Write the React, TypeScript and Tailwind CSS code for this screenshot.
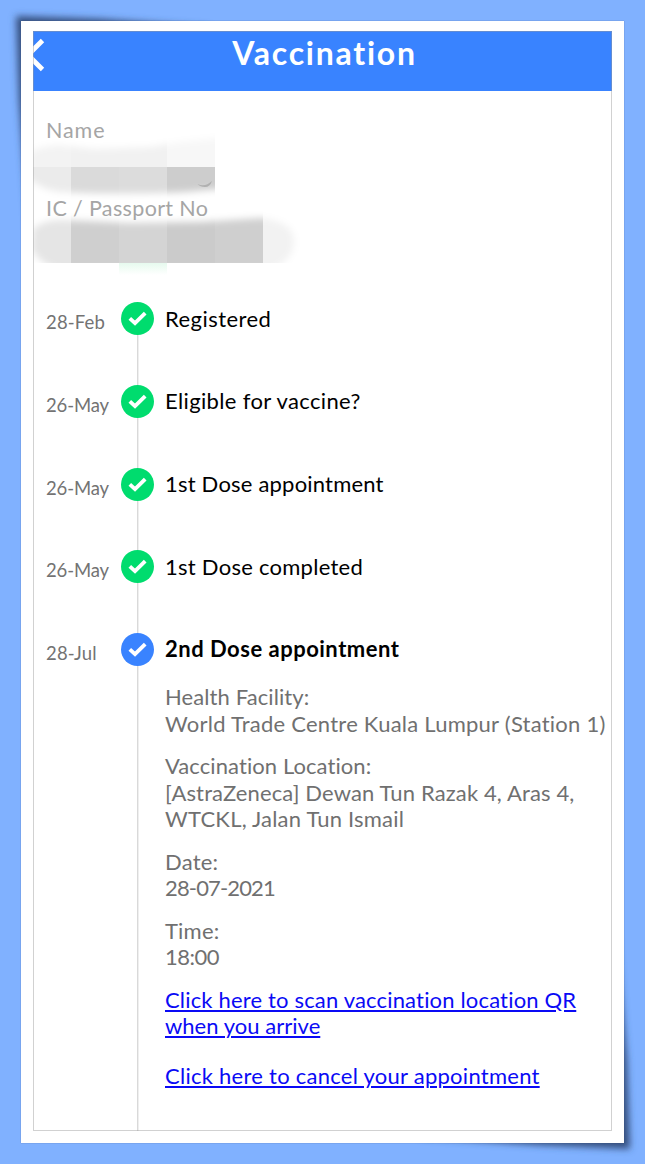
import React from 'react'

const steps = [
  { date: '28-Feb', title: 'Registered', dateClass: 'tracking-[0.15px]', titleClass: 'tracking-[0.45px]' },
  { date: '26-May', title: 'Eligible for vaccine?', dateClass: 'tracking-[-0.15px]', titleClass: 'tracking-[0.35px]' },
  { date: '26-May', title: '1st Dose appointment', dateClass: 'tracking-[-0.15px]', titleClass: 'tracking-[0.2px]' },
  { date: '26-May', title: '1st Dose completed', dateClass: 'tracking-[-0.15px]', titleClass: 'tracking-[0.26px]' },
]

const Check = ({ className }: { className: string }) => (
  <svg viewBox="0 0 33 33" className={`relative block h-[33px] w-[33px] ${className}`}>
    <circle cx="16.5" cy="16.5" r="16.5" fill="currentColor" />
    <path d="M8.8 16.4 L14 21.2 L24.2 11.2" fill="none" stroke="#fff" strokeWidth="3.8" />
  </svg>
)

const Rail = () => (
  <div className="absolute inset-y-0 left-4 w-px bg-[#d9d9d9] shadow-[1px_0_0_#efefef]" />
)

// Lifted corners of the paper
const CornerShadows = () => (
  <svg className="absolute left-0 top-0 h-[1164px] w-[645px]" viewBox="0 0 645 1164">
    <defs>
      <filter id="lift" x="-20%" y="-20%" width="140%" height="140%">
        <feGaussianBlur stdDeviation="3.5" />
      </filter>
    </defs>
    <g fill="#35507e" filter="url(#lift)">
      <path d="M16 16 L100 19 L210 27 L29 240 L19 100 Z" />
      <path d="M630 1149 L540 1145 L420 1137 L616 930 L627 1060 Z" />
    </g>
  </svg>
)

// Pixelated strips that hide the personal details
const Redacted = () => (
  <svg className="absolute left-0 top-0" width="300" height="200" viewBox="33 91 300 200">
    <defs>
      <filter id="soft" x="-20%" y="-40%" width="140%" height="180%">
        <feGaussianBlur stdDeviation="3.5" />
      </filter>
      <linearGradient id="green" x1="0" y1="0" x2="0" y2="1">
        <stop offset="0" stopColor="#e6faee" />
        <stop offset="1" stopColor="#fff" />
      </linearGradient>
      <mask id="nameTop">
        <path d="M30 152 Q44 145 60 145 L95 149 L150 147 L180 142 L230 137 V180 H30 Z" fill="#fff" filter="url(#soft)" />
      </mask>
      <mask id="nameBottom">
        <path d="M26 155 H230 V188 L185 192 Q120 195 60 192 Q40 190 26 176 Z" fill="#fff" filter="url(#soft)" />
      </mask>
      <mask id="passport">
        <path d="M33 229 Q43 220 62 220 L130 223 L200 222 L262 218 Q294 222 294 241 Q294 260 270 270 H60 Q40 264 32 250 Z" fill="#fff" filter="url(#soft)" />
      </mask>
    </defs>
    <g mask="url(#nameTop)" shapeRendering="crispEdges">
      <rect x="33" y="130" width="38" height="37" fill="#f3f3f3" />
      <rect x="71" y="130" width="96" height="37" fill="#f1f1f1" />
      <rect x="167" y="130" width="48" height="37" fill="#f7f7f7" />
    </g>
    <g mask="url(#nameBottom)" shapeRendering="crispEdges">
      <rect x="33" y="167" width="38" height="33" fill="#ebebeb" />
      <rect x="71" y="167" width="48" height="33" fill="#dadada" />
      <rect x="119" y="167" width="48" height="33" fill="#dcdcdc" />
      <rect x="167" y="167" width="48" height="33" fill="#cdcdcd" />
    </g>
    <path d="M197.5 184 Q205 187.5 212 181 Q210 187 205 187 Q200 187 197.5 184 Z" fill="#b0b0b0" />
    <g mask="url(#passport)" shapeRendering="crispEdges">
      <rect x="33" y="210" width="38" height="53" fill="#e5e5e5" />
      <rect x="71" y="210" width="48" height="53" fill="#cfcfcf" />
      <rect x="119" y="210" width="48" height="53" fill="#d4d4d4" />
      <rect x="167" y="210" width="48" height="53" fill="#cbcbcb" />
      <rect x="215" y="210" width="48" height="53" fill="#cfcfcf" />
      <rect x="263" y="210" width="40" height="53" fill="#f2f2f2" />
    </g>
    <rect x="119" y="263" width="48" height="12" fill="url(#green)" />
  </svg>
)

const App = () => {
  return (
    <div className="relative h-[1164px] w-[645px] overflow-hidden bg-[#80b1ff] px-[21px] pt-[21px] font-[Lato,sans-serif]">
      <CornerShadows />

      <div className="relative h-[1122px] w-[603px] bg-white px-3 pt-2.5 shadow-[0_0_1px_rgba(60,80,120,0.7)]">
        <div className="relative flex h-[1100px] w-[579px] flex-col overflow-hidden">
          <header className="relative h-[60px] shrink-0 bg-[#3983ff] pl-1 text-center text-[32px] font-bold leading-[44px] text-white">
            <svg className="absolute left-0 top-0" width="20" height="50" viewBox="0 0 20 50">
              <path d="M9.5 9.5 L-5 24 L9.5 38.5" fill="none" stroke="#fff" strokeWidth="4.8" />
            </svg>
            <span className="tracking-[1.75px]">Vaccination</span>
          </header>

          <section className="relative h-[211px] shrink-0 pl-[13px] pt-[26px] text-[21.5px] leading-[26px] text-[#a5a5a5]">
            <Redacted />
            <p className="relative mb-[52px] tracking-[0.9px]">Name</p>
            <p className="relative tracking-[0.36px]">IC / Passport No</p>
          </section>

          <main className="flex flex-1 flex-col pl-[13px]">
            {steps.map((step) => (
              <div key={step.title} className="flex h-[82.8px] shrink-0">
                <div className={`w-[75px] pt-[7px] text-[18.5px] leading-[26px] text-[#737373] ${step.dateClass}`}>{step.date}</div>
                <div className="relative w-11 shrink-0">
                  <Rail />
                  <Check className="text-[#00dc6e]" />
                </div>
                <div className={`pt-[3.6px] text-[22px] leading-[26px] text-black ${step.titleClass}`}>{step.title}</div>
              </div>
            ))}

            <div className="flex flex-1">
              <div className="w-[75px] pt-[7px] text-[18.5px] leading-[26px] tracking-[0.2px] text-[#737373]">28-Jul</div>
              <div className="relative w-11 shrink-0">
                <Rail />
                <Check className="text-[#3983ff]" />
              </div>
              <div className="whitespace-nowrap pt-[3px] text-[22px] leading-[26.5px] text-[#707070]">
                <p className="mb-[21.5px] font-bold tracking-[0.5px] text-black">2nd Dose appointment</p>
                <p className="tracking-[0.1px]">Health Facility:</p>
                <p className="mb-4 tracking-[0.24px]">World Trade Centre Kuala Lumpur (Station 1)</p>
                <p className="tracking-[0.08px]">Vaccination Location:</p>
                <p className="tracking-[0.13px]">[AstraZeneca] Dewan Tun Razak 4, Aras 4,</p>
                <p className="mb-4 tracking-[0.2px]">WTCKL, Jalan Tun Ismail</p>
                <p className="tracking-[0.2px]">Date:</p>
                <p className="mb-4 tracking-[-0.85px]">28-07-2021</p>
                <p className="tracking-[0.2px]">Time:</p>
                <p className="mb-4 tracking-[-0.5px]">18:00</p>
                <a className="block text-[#0a0af5] underline decoration-[1.5px] underline-offset-2">
                  <span className="block tracking-[0.17px]">Click here to scan vaccination location QR</span>
                  <span className="block tracking-[0.03px]">when you arrive</span>
                </a>
                <a className="mt-[23.5px] block tracking-[0.26px] text-[#0a0af5] underline decoration-[1.5px] underline-offset-2">Click here to cancel your appointment</a>
              </div>
            </div>
          </main>
          <div className="pointer-events-none absolute inset-0 border border-[#999]/45" />
        </div>
      </div>
    </div>
  )
}

export default App
